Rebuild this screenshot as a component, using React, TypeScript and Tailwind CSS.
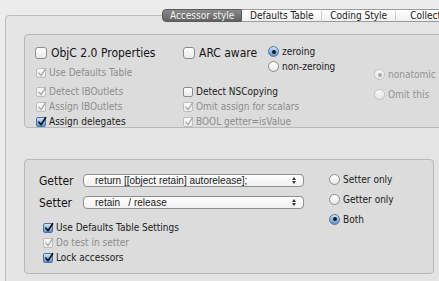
import type { ReactNode } from 'react';

const FONT = "font-['DejaVu_Sans_Condensed','DejaVu_Sans',sans-serif]";

function Check({ checked, disabled, big }: { checked?: boolean; disabled?: boolean; big?: boolean }) {
  const size = big ? 'h-[12px] w-[12px] rounded-[3px]' : 'h-[10px] w-[10px] rounded-[2px]';
  let tone = 'border-[#8c8c8c] bg-linear-to-b from-white to-[#e9e9e9]';
  if (checked && !disabled) tone = 'border-[#50719c] bg-linear-to-b from-[#d3e5f8] via-[#8db8e6] to-[#5d95d4]';
  if (disabled) tone = 'border-[#bcbcbc] bg-linear-to-b from-[#fbfbfb] to-[#ebebeb]';
  return (
    <span className={`relative flex-shrink-0 border ${size} ${tone}`}>
      {checked && (
        <svg viewBox="0 0 10 10" className="absolute -top-[2px] left-[0px] h-[11px] w-[10px]">
          <path
            d="M1.8 5.6 L4 8.2 L8.6 1.2"
            fill="none"
            stroke={disabled ? '#a8a8a8' : '#111'}
            strokeWidth={disabled ? 1.3 : 1.6}
            strokeLinecap="round"
            strokeLinejoin="round"
          />
        </svg>
      )}
    </span>
  );
}

function Radio({ on, disabled }: { on?: boolean; disabled?: boolean }) {
  let tone = 'border-[#8c8c8c] bg-linear-to-b from-white to-[#e9e9e9]';
  if (on && !disabled) tone = 'border-[#50719c] bg-linear-to-b from-[#d3e5f8] via-[#8db8e6] to-[#5d95d4]';
  if (disabled) tone = 'border-[#c2c2c2] bg-linear-to-b from-[#f8f8f8] to-[#e6e6e6]';
  return (
    <span className={`flex h-[11px] w-[11px] flex-shrink-0 items-center justify-center rounded-full border ${tone}`}>
      {on && <span className={`h-[4px] w-[4px] rounded-full ${disabled ? 'bg-[#a9a9a9]' : 'bg-[#1a1a1a]'}`} />}
    </span>
  );
}

function Row({ children, h = 'h-[15px]', className = '' }: { children: ReactNode; h?: string; className?: string }) {
  return <div className={`flex items-center whitespace-nowrap ${h} ${className}`}>{children}</div>;
}

function SmallCheck({ label, checked, disabled }: { label: string; checked?: boolean; disabled?: boolean }) {
  return (
    <Row>
      <Check checked={checked} disabled={disabled} />
      <span className={`ml-[3px] text-[10px] ${disabled ? 'text-[#8d8d8d]' : 'text-[#1b1b1b]'}`}>{label}</span>
    </Row>
  );
}

function SmallRadio({ label, on, disabled, h }: { label: string; on?: boolean; disabled?: boolean; h?: string }) {
  return (
    <Row h={h}>
      <Radio on={on} disabled={disabled} />
      <span className={`ml-[3px] text-[10px] ${disabled ? 'text-[#929292]' : 'text-[#1b1b1b]'}`}>{label}</span>
    </Row>
  );
}

function Popup({ text }: { text: string }) {
  return (
    <div className="flex h-[13px] w-[221px] items-center rounded-[4px] border border-[#8f8f8f] bg-linear-to-b from-white to-[#f1f1f1] pl-[11px] pr-[7px]">
      <span className="flex-1 whitespace-pre font-['Liberation_Sans',sans-serif] text-[10px] text-[#1b1b1b]">{text}</span>
      <span className="flex flex-col items-center gap-[1px]">
        <span className="h-0 w-0 border-x-[2px] border-b-[3px] border-x-transparent border-b-[#333]" />
        <span className="h-0 w-0 border-x-[2px] border-t-[3px] border-x-transparent border-t-[#333]" />
      </span>
    </div>
  );
}

const TABS = [
  { label: 'Accessor style', w: 'w-[81px]', active: true },
  { label: 'Defaults Table', w: 'w-[80px]' },
  { label: 'Coding Style', w: 'w-[74px]' },
  { label: 'Collections', w: 'w-[80px]' },
];

export default function App() {
  return (
    <div className={`h-[281px] w-[439px] overflow-hidden bg-[#ececec] pt-[15px] ${FONT}`}>
      <div className="ml-[5px] h-[300px] w-[470px] rounded-[4px] border border-[#bdbdbd] bg-[#e4e4e4]">
        <div className="-mt-[7px] ml-[156px] flex h-[13px]">
          {TABS.map((t, i) => (
            <div
              key={t.label}
              className={`flex items-center justify-center whitespace-nowrap text-[10px] ${t.w} ${
                t.active
                  ? 'rounded-l-[4px] border border-[#5c5c5c] bg-linear-to-b from-[#8a8a8a] to-[#626262] text-[#f4f4f4]'
                  : `border-y border-[#9c9c9c] bg-linear-to-b from-white to-[#f0f0f0] text-[#1b1b1b] ${
                      i > 1 ? 'border-l border-l-[#d0d0d0]' : ''
                    }`
              }`}
            >
              {t.label}
            </div>
          ))}
        </div>

        <div className="ml-[18px] mt-[12px] flex h-[94px] w-[450px] rounded-[4px] border border-[#b8b8b8] bg-[#dcdcdc] pl-[10px] pt-[12px]">
          <div className="w-[148px]">
            <Row h="h-[12px]">
              <Check big />
              <span className="ml-[4px] text-[12px] text-[#141414]">ObjC 2.0 Properties</span>
            </Row>
            <div className="ml-[1px] mt-[6px]">
              <SmallCheck label="Use Defaults Table" checked disabled />
              <div className="mt-[4px]">
                <SmallCheck label="Detect IBOutlets" checked disabled />
                <SmallCheck label="Assign IBOutlets" checked disabled />
                <SmallCheck label="Assign delegates" checked />
              </div>
            </div>
          </div>
          <div className="w-[85px]">
            <Row h="h-[12px]">
              <Check big />
              <span className="ml-[4px] text-[12px] text-[#141414]">ARC aware</span>
            </Row>
            <div className="mt-[25px]">
              <SmallCheck label="Detect NSCopying" />
              <SmallCheck label="Omit assign for scalars" checked disabled />
              <SmallCheck label="BOOL  getter=isValue" checked disabled />
            </div>
          </div>
          <div className="-mt-[3px] w-[106px]">
            <SmallRadio label="zeroing" on />
            <SmallRadio label="non-zeroing" />
          </div>
          <div className="mt-[20px]">
            <SmallRadio label="nonatomic" on disabled h="h-[15px]" />
            <div className="mt-[5px]">
              <SmallRadio label="Omit this" disabled />
            </div>
          </div>
        </div>

        <div className="ml-[18px] mt-[31px] flex h-[115px] w-[410px] rounded-[4px] border border-[#b8b8b8] bg-[#dcdcdc] pl-[14px]">
          <div className="w-[290px] pt-[14px]">
            <Row h="h-[13px]">
              <span className="w-[44px] text-[12px] text-[#141414]">Getter</span>
              <Popup text="return [[object retain] autorelease];" />
            </Row>
            <Row h="h-[13px]" className="mt-[9px]">
              <span className="w-[44px] text-[12px] text-[#141414]">Setter</span>
              <Popup text="retain   / release" />
            </Row>
            <div className="ml-[4px] mt-[11px]">
              <SmallCheck label="Use Defaults Table Settings" checked />
              <SmallCheck label="Do test in setter" checked disabled />
              <SmallCheck label="Lock accessors" checked />
            </div>
          </div>
          <div className="pt-[9px]">
            <SmallRadio label="Setter only" h="h-[20px]" />
            <SmallRadio label="Getter only" h="h-[20px]" />
            <SmallRadio label="Both" on h="h-[20px]" />
          </div>
        </div>
      </div>
    </div>
  );
}
